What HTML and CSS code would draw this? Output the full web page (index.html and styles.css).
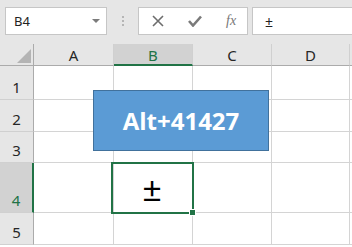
FILE: index.html
```html
<!DOCTYPE html>
<html lang="en">
<head>
  <meta charset="UTF-8" />
  <title>Alt+41427</title>
  <link rel="stylesheet" href="styles.css">
</head>
<body>
  <div class="formula-bar">
    <div class="name-box">
      <span>B4</span>
      <span class="arrow"></span>
    </div>
    <div class="grip"><i></i><i></i><i></i></div>
    <div class="fn-buttons">
      <svg class="ico" width="12" height="12" viewBox="0 0 12 12">
        <path d="M1 1 L11 11 M11 1 L1 11" stroke="#6d6d6d" stroke-width="1.6" fill="none"/>
      </svg>
      <svg class="ico" width="14" height="12" viewBox="0 0 14 12">
        <path d="M1 6 L5 10.5 L13 1.5" stroke="#7a7a7a" stroke-width="2.6" fill="none"/>
      </svg>
      <span class="fx">fx</span>
    </div>
    <div class="formula-input">±</div>
  </div>

  <div class="sheet">
    <div class="grid">
      <div class="corner"><span class="tri"></span></div>
      <div class="col-head">A</div>
      <div class="col-head active">B</div>
      <div class="col-head">C</div>
      <div class="col-head">D</div>
      <div class="col-head last"></div>

      <div class="row-head">1</div>
      <div class="cell"></div><div class="cell"></div><div class="cell"></div><div class="cell"></div><div class="cell last"></div>

      <div class="row-head">2</div>
      <div class="cell"></div><div class="cell"></div><div class="cell"></div><div class="cell"></div><div class="cell last"></div>

      <div class="row-head">3</div>
      <div class="cell"></div><div class="cell"></div><div class="cell"></div><div class="cell"></div><div class="cell last"></div>

      <div class="row-head active">4</div>
      <div class="cell"></div><div class="cell selected">±</div><div class="cell"></div><div class="cell"></div><div class="cell last"></div>

      <div class="row-head">5</div>
      <div class="cell"></div><div class="cell"></div><div class="cell"></div><div class="cell"></div><div class="cell last"></div>
    </div>

    <div class="shape">Alt+41427</div>
  </div>
</body>
</html>
```

FILE: styles.css
```css
body {
  margin: 0;
  width: 352px;
  height: 247px;
  overflow: hidden;
  background-color: #ffffff;
  font-family: 'Noto Sans', 'Liberation Sans', sans-serif;
  color: #222;
}

/* ---- formula bar ---- */

.formula-bar {
  height: 44px;
  box-sizing: border-box;
  background-color: #e6e6e6;
  display: flex;
  align-items: flex-start;
  padding-top: 7px;
  padding-left: 5px;
}

.name-box,
.fn-buttons,
.formula-input {
  height: 28px;
  box-sizing: border-box;
  background-color: #fff;
  border: 1px solid #c6c6c6;
  display: flex;
  align-items: center;
}

.name-box {
  width: 102px;
  padding: 0 6px 0 8px;
  justify-content: space-between;
  font-size: 13px;
}

.arrow {
  width: 0;
  height: 0;
  border-left: 4px solid transparent;
  border-right: 4px solid transparent;
  border-top: 4px solid #7b7b7b;
}

.grip {
  width: 31px;
  display: flex;
  flex-direction: column;
  align-items: center;
  gap: 2px;
  padding-top: 9px;
}

.grip i {
  width: 2px;
  height: 2px;
  background-color: #b5b5b5;
}

.fn-buttons {
  width: 110px;
  padding-left: 13px;
}

.fn-buttons .ico {
  margin-right: 24px;
}

.fx {
  font-family: 'Liberation Serif', serif;
  font-style: italic;
  font-size: 14px;
  color: #777;
}

.formula-input {
  flex: 1;
  margin-left: 4px;
  border-right: none;
  padding-left: 12px;
  font-size: 14px;
}

/* ---- sheet ---- */

.sheet {
  position: relative;
}

.grid {
  display: grid;
  grid-template-columns: 34px 80px 79px 79px 78px 2px;
  grid-template-rows: 22px 34px 32px 31px 50px 32px;
}

.grid > div {
  box-sizing: border-box;
}

.corner,
.col-head,
.row-head {
  background-color: #e6e6e6;
  color: #262626;
  font-size: 15px;
  display: flex;
  align-items: center;
  justify-content: center;
}

.corner {
  border-right: 1px solid #ababab;
  border-bottom: 1px solid #ababab;
  position: relative;
}

.tri {
  position: absolute;
  right: 2px;
  bottom: 2px;
  width: 0;
  height: 0;
  border-left: 14px solid transparent;
  border-bottom: 14px solid #b4b4b4;
}

.col-head {
  border-right: 1px solid #d0d0d0;
  border-bottom: 1px solid #ababab;
  padding-top: 1px;
}

.col-head.active {
  background-color: #d2d2d2;
  color: #217346;
  border-bottom: 2px solid #217346;
}

.row-head {
  border-right: 1px solid #ababab;
  border-bottom: 1px solid #d0d0d0;
  align-items: flex-end;
  padding-bottom: 2px;
}

.row-head.active {
  background-color: #d2d2d2;
  color: #217346;
  border-right: 2px solid #217346;
}

.cell {
  border-right: 1px solid #d4d4d4;
  border-bottom: 1px solid #d4d4d4;
}

.col-head.last,
.cell.last {
  border-right: none;
}

.cell.selected {
  position: relative;
  outline: 2px solid #217346;
  outline-offset: -1px;
  margin-left: -2px;
  font-family: 'Liberation Sans', sans-serif;
  font-size: 33px;
  line-height: 1;
  color: #000;
  display: flex;
  align-items: center;
  justify-content: center;
  padding-top: 4px;
  z-index: 1;
}

.cell.selected::after {
  content: '';
  position: absolute;
  right: -4px;
  bottom: -4px;
  width: 5px;
  height: 5px;
  background-color: #217346;
  border: 1px solid #fff;
}

/* floating shape over the grid */
.shape {
  position: absolute;
  left: 93px;
  top: 46px;
  width: 176px;
  height: 61px;
  box-sizing: border-box;
  background-color: #5b9bd5;
  border: 1px solid #41719c;
  color: #fff;
  font-family: 'Open Sans', sans-serif;
  font-weight: 700;
  font-size: 24px;
  display: flex;
  align-items: center;
  justify-content: center;
  z-index: 2;
}
```
